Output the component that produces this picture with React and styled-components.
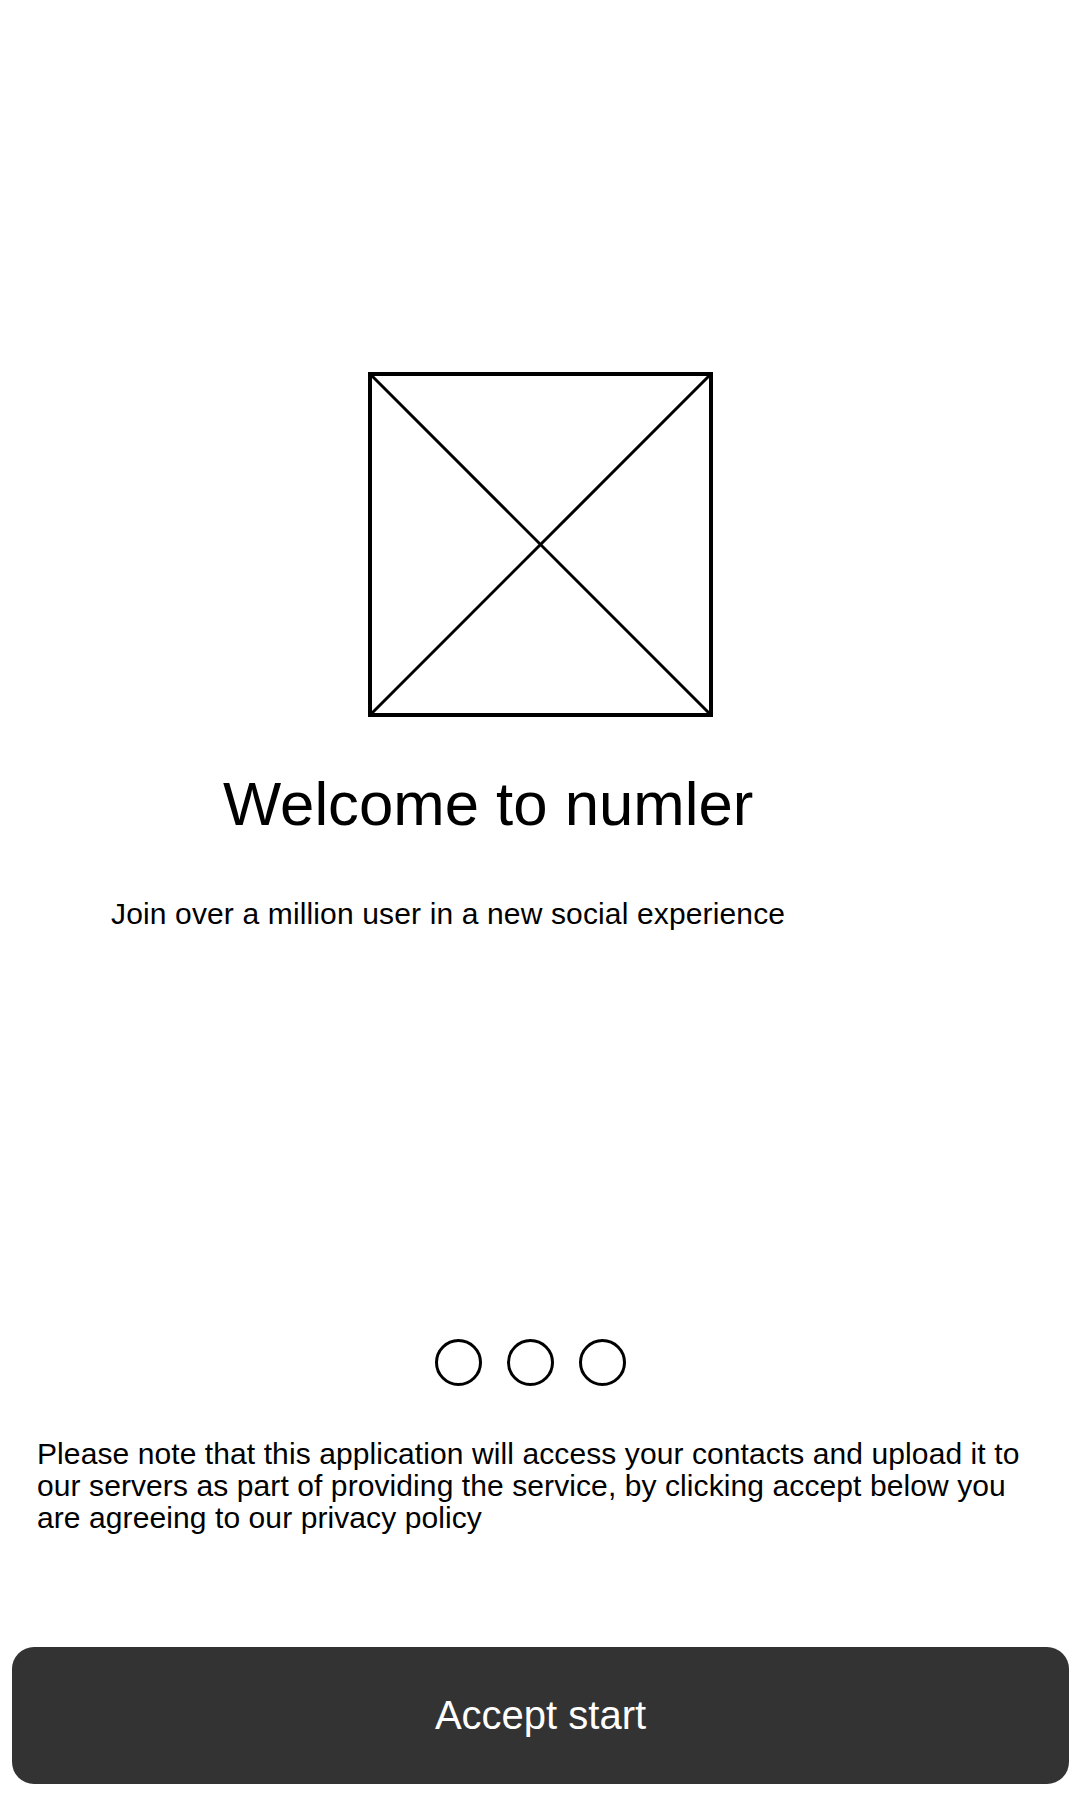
import React from 'react';
import styled, { createGlobalStyle } from 'styled-components';

const GlobalStyle = createGlobalStyle`
  html, body {
    margin: 0;
    padding: 0;
    background: #fff;
  }

  body {
    font-family: 'Liberation Sans', Arial, sans-serif;
    color: #000;
  }
`;

const Screen = styled.div`
  display: flex;
  flex-direction: column;
  box-sizing: border-box;
  width: 1080px;
  min-height: 1800px;
  padding: 372px 0 16px;
`;

const Placeholder = styled.div`
  box-sizing: border-box;
  width: 345px;
  height: 345px;
  margin: 0 auto;
  border: 4px solid #000;

  svg {
    display: block;
    width: 100%;
    height: 100%;
  }
`;

const Title = styled.h1`
  margin: 52px 0 0 223px;
  font-size: 61.7px;
  font-weight: 400;
  line-height: 70px;
`;

const Subtitle = styled.p`
  margin: 58px 0 0 111px;
  font-size: 30px;
  line-height: 34px;
  letter-spacing: 0.14px;
`;

const Dots = styled.div`
  display: flex;
  justify-content: center;
  gap: 25px;
  margin-top: 408px;
  padding-right: 19px;
`;

const Dot = styled.span`
  box-sizing: border-box;
  width: 47px;
  height: 47px;
  border-radius: 50%;
  border: 3px solid #000;
  background: ${(p) => (p.active ? '#000' : 'transparent')};
`;

const Notice = styled.p`
  margin: 52px 0 0;
  padding: 0 37px;
  font-size: 30px;
  line-height: 32px;
  letter-spacing: 0.09px;
`;

const AcceptButton = styled.button`
  display: flex;
  align-items: center;
  justify-content: center;
  height: 137px;
  margin: auto 11px 0 12px;
  padding: 0;
  border: none;
  border-radius: 22px;
  background: #333;
  color: #fff;
  font-family: 'Liberation Sans', Arial, sans-serif;
  font-size: 40px;
  cursor: pointer;
`;

function App() {
  return (
    <>
      <GlobalStyle />
      <Screen>
        <Placeholder>
          <svg viewBox='0 0 100 100' preserveAspectRatio='none'>
            <line x1='0' y1='0' x2='100' y2='100' stroke='#000' strokeWidth='3' vectorEffect='non-scaling-stroke' />
            <line x1='100' y1='0' x2='0' y2='100' stroke='#000' strokeWidth='3' vectorEffect='non-scaling-stroke' />
          </svg>
        </Placeholder>
        <Title>Welcome to numler</Title>
        <Subtitle>Join over a million user in a new social experience</Subtitle>
        <Dots>
          <Dot />
          <Dot />
          <Dot />
        </Dots>
        <Notice>
          Please note that this application will access your contacts and upload it to our servers as part of
          providing the service, by clicking accept below you are agreeing to our privacy policy
        </Notice>
        <AcceptButton>Accept start</AcceptButton>
      </Screen>
    </>
  );
}

export default App;
